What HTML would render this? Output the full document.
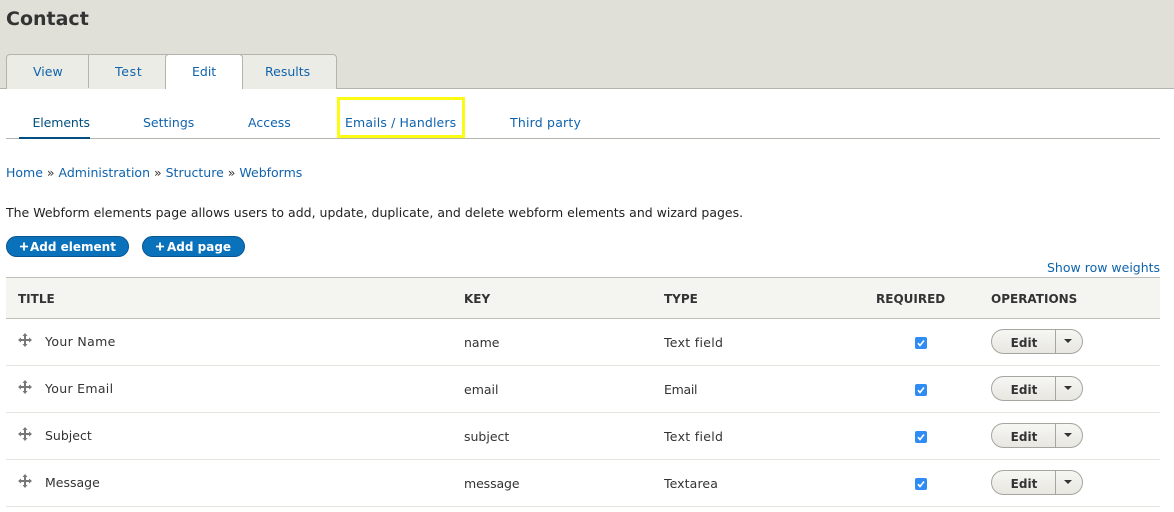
<!DOCTYPE html>
<html><head><meta charset="utf-8"><style>
html,body{margin:0;padding:0;background:#fff}
body{width:1174px;height:512px;position:relative;overflow:hidden;font-family:"DejaVu Sans","Liberation Sans",sans-serif;font-size:12.5px;color:#333}
.a{position:absolute;white-space:nowrap;line-height:16px}
.l{color:#0f63ad}
.b{position:absolute;box-sizing:border-box}
.th{font-weight:bold;font-size:12px;color:#333;top:291px}
.btn{position:absolute;left:991px;width:92px;height:25px;box-sizing:border-box;border:1px solid #a6a6a0;border-radius:13px;background:linear-gradient(#f6f6f3,#e8e7e1)}
.btn i{position:absolute;left:63px;top:0;width:1px;height:23px;background:#a6a6a0}
.btn u{position:absolute;left:72px;top:9px;border:4px solid transparent;border-top:4px solid #333;border-bottom:0;text-decoration:none}
.btn b{position:absolute;left:0;width:64px;text-align:center;top:5px;line-height:16px;font-size:12px;color:#333}
.cb{position:absolute;left:915px;width:12px;height:12px;border-radius:2px;background:#2f8cf5}
.cb svg{position:absolute;left:0;top:0}
.dr{position:absolute;left:18px}
.pb{position:absolute;top:236px;height:21px;box-sizing:border-box;background:#0a71bb;border:1px solid #07568f;border-radius:11px;color:#fff;font-weight:bold;font-size:12px;line-height:19px;white-space:nowrap}
.pb svg{position:absolute;top:4px}
.pb span{position:absolute;top:1px}
</style></head><body>
<div class="b" style="left:0;top:0;width:1174px;height:88px;background:#e0e0d8"></div>
<div class="b" style="left:0;top:88px;width:1174px;height:1px;background:#b4b4ae"></div>
<div class="a" style="left:6px;top:6px;font-size:19px;line-height:26px;font-weight:bold;color:#333">Contact</div>

<div class="b" style="left:6px;top:54px;width:331px;height:35px;background:#ecece6;border:1px solid #b4b4ae;border-bottom:0;border-radius:4px 4px 0 0"></div>
<div class="b" style="left:88px;top:55px;width:1px;height:33px;background:#b4b4ae"></div>
<div class="b" style="left:165px;top:54px;width:78px;height:35px;background:#fff;border:1px solid #b4b4ae;border-bottom:0;border-radius:4px 4px 0 0"></div>
<div class="a l" style="left:33px;top:64px">View</div>
<div class="a l" style="left:115px;top:64px;letter-spacing:.7px">Test</div>
<div class="a l" style="left:192px;top:64px">Edit</div>
<div class="a l" style="left:265px;top:64px">Results</div>

<div class="b" style="left:6px;top:138px;width:1154px;height:1px;background:#b4b4ae"></div>
<div class="b" style="left:19px;top:137px;width:71px;height:2px;background:#004f80"></div>
<div class="b" style="left:337px;top:97px;width:128px;height:41px;border:3px solid #fbfb14"></div>
<div class="a" style="left:32.500px;top:115px;color:#004f80;letter-spacing:-.1px">Elements</div>
<div class="a l" style="left:143px;top:115px">Settings</div>
<div class="a l" style="left:248px;top:115px">Access</div>
<div class="a l" style="left:345px;top:115px;letter-spacing:.13px">Emails / Handlers</div>
<div class="a l" style="left:510px;top:115px;letter-spacing:.2px">Third party</div>

<div class="a" style="left:6px;top:165px;color:#333"><span class="l">Home</span> » <span class="l">Administration</span> » <span class="l">Structure</span> » <span class="l">Webforms</span></div>
<div class="a" style="left:6px;top:205px;color:#222;font-size:12.5px">The Webform elements page allows users to add, update, duplicate, and delete webform elements and wizard pages.</div>

<div class="pb" style="left:6px;width:123px"><svg style="left:12px" width="10" height="11"><path d="M1 5.500H9M5 1.500V9.500" stroke="#fff" stroke-width="1.800"/></svg><span style="left:23px">Add element</span></div>
<div class="pb" style="left:142px;width:103px"><svg style="left:12px" width="10" height="11"><path d="M1 5.500H9M5 1.500V9.500" stroke="#fff" stroke-width="1.800"/></svg><span style="left:24px">Add page</span></div>
<div class="a l" style="left:1047px;top:260px">Show row weights</div>

<div class="b" style="left:6px;top:277px;width:1154px;height:42px;background:#f4f4f0;border-top:1px solid #bfbfba;border-bottom:1px solid #bfbfba"></div>
<div class="a th" style="left:18px">TITLE</div>
<div class="a th" style="left:464px">KEY</div>
<div class="a th" style="left:664px">TYPE</div>
<div class="a th" style="left:876px">REQUIRED</div>
<div class="a th" style="left:991px">OPERATIONS</div>

<div class="b" style="left:6px;top:365px;width:1154px;height:1px;background:#e4e4df"></div>
<div class="b" style="left:6px;top:412px;width:1154px;height:1px;background:#e4e4df"></div>
<div class="b" style="left:6px;top:459px;width:1154px;height:1px;background:#e4e4df"></div>
<div class="b" style="left:6px;top:506px;width:1154px;height:1px;background:#e4e4df"></div>

<svg class="dr" style="top:333px" width="14" height="14" viewBox="0 0 14 14"><path d="M7 0L9.5 3H8V6H11V4.5L14 7L11 9.5V8H8V11H9.5L7 14L4.500 11H6V8H3V9.500L0 7L3 4.500V6H6V3H4.500Z" fill="#777"/></svg>
<svg class="dr" style="top:380px" width="14" height="14" viewBox="0 0 14 14"><path d="M7 0L9.5 3H8V6H11V4.5L14 7L11 9.5V8H8V11H9.5L7 14L4.500 11H6V8H3V9.500L0 7L3 4.500V6H6V3H4.500Z" fill="#777"/></svg>
<svg class="dr" style="top:427px" width="14" height="14" viewBox="0 0 14 14"><path d="M7 0L9.5 3H8V6H11V4.5L14 7L11 9.5V8H8V11H9.5L7 14L4.500 11H6V8H3V9.500L0 7L3 4.500V6H6V3H4.500Z" fill="#777"/></svg>
<svg class="dr" style="top:474px" width="14" height="14" viewBox="0 0 14 14"><path d="M7 0L9.5 3H8V6H11V4.5L14 7L11 9.5V8H8V11H9.5L7 14L4.500 11H6V8H3V9.500L0 7L3 4.500V6H6V3H4.500Z" fill="#777"/></svg>

<div class="a" style="left:45px;top:334px;letter-spacing:.35px">Your Name</div>
<div class="a" style="left:464px;top:335px">name</div>
<div class="a" style="left:664px;top:335px;letter-spacing:.3px">Text field</div>
<div class="a" style="left:45px;top:381px;letter-spacing:.3px">Your Email</div>
<div class="a" style="left:464px;top:382px">email</div>
<div class="a" style="left:664px;top:382px;letter-spacing:-.3px">Email</div>
<div class="a" style="left:45px;top:428px">Subject</div>
<div class="a" style="left:464px;top:429px">subject</div>
<div class="a" style="left:664px;top:429px;letter-spacing:.3px">Text field</div>
<div class="a" style="left:45px;top:475px">Message</div>
<div class="a" style="left:464px;top:476px;letter-spacing:-.1px">message</div>
<div class="a" style="left:664px;top:476px;letter-spacing:.1px">Textarea</div>

<div class="cb" style="top:337px"><svg width="12" height="12"><path d="M3 6.200L5 8.500L9 3.500" fill="none" stroke="#fff" stroke-width="1.600"/></svg></div>
<div class="cb" style="top:384px"><svg width="12" height="12"><path d="M3 6.200L5 8.500L9 3.500" fill="none" stroke="#fff" stroke-width="1.600"/></svg></div>
<div class="cb" style="top:431px"><svg width="12" height="12"><path d="M3 6.200L5 8.500L9 3.500" fill="none" stroke="#fff" stroke-width="1.600"/></svg></div>
<div class="cb" style="top:478px"><svg width="12" height="12"><path d="M3 6.200L5 8.500L9 3.500" fill="none" stroke="#fff" stroke-width="1.600"/></svg></div>

<div class="btn" style="top:329px"><b>Edit</b><i></i><u></u></div>
<div class="btn" style="top:376px"><b>Edit</b><i></i><u></u></div>
<div class="btn" style="top:423px"><b>Edit</b><i></i><u></u></div>
<div class="btn" style="top:470px"><b>Edit</b><i></i><u></u></div>
</body></html>
